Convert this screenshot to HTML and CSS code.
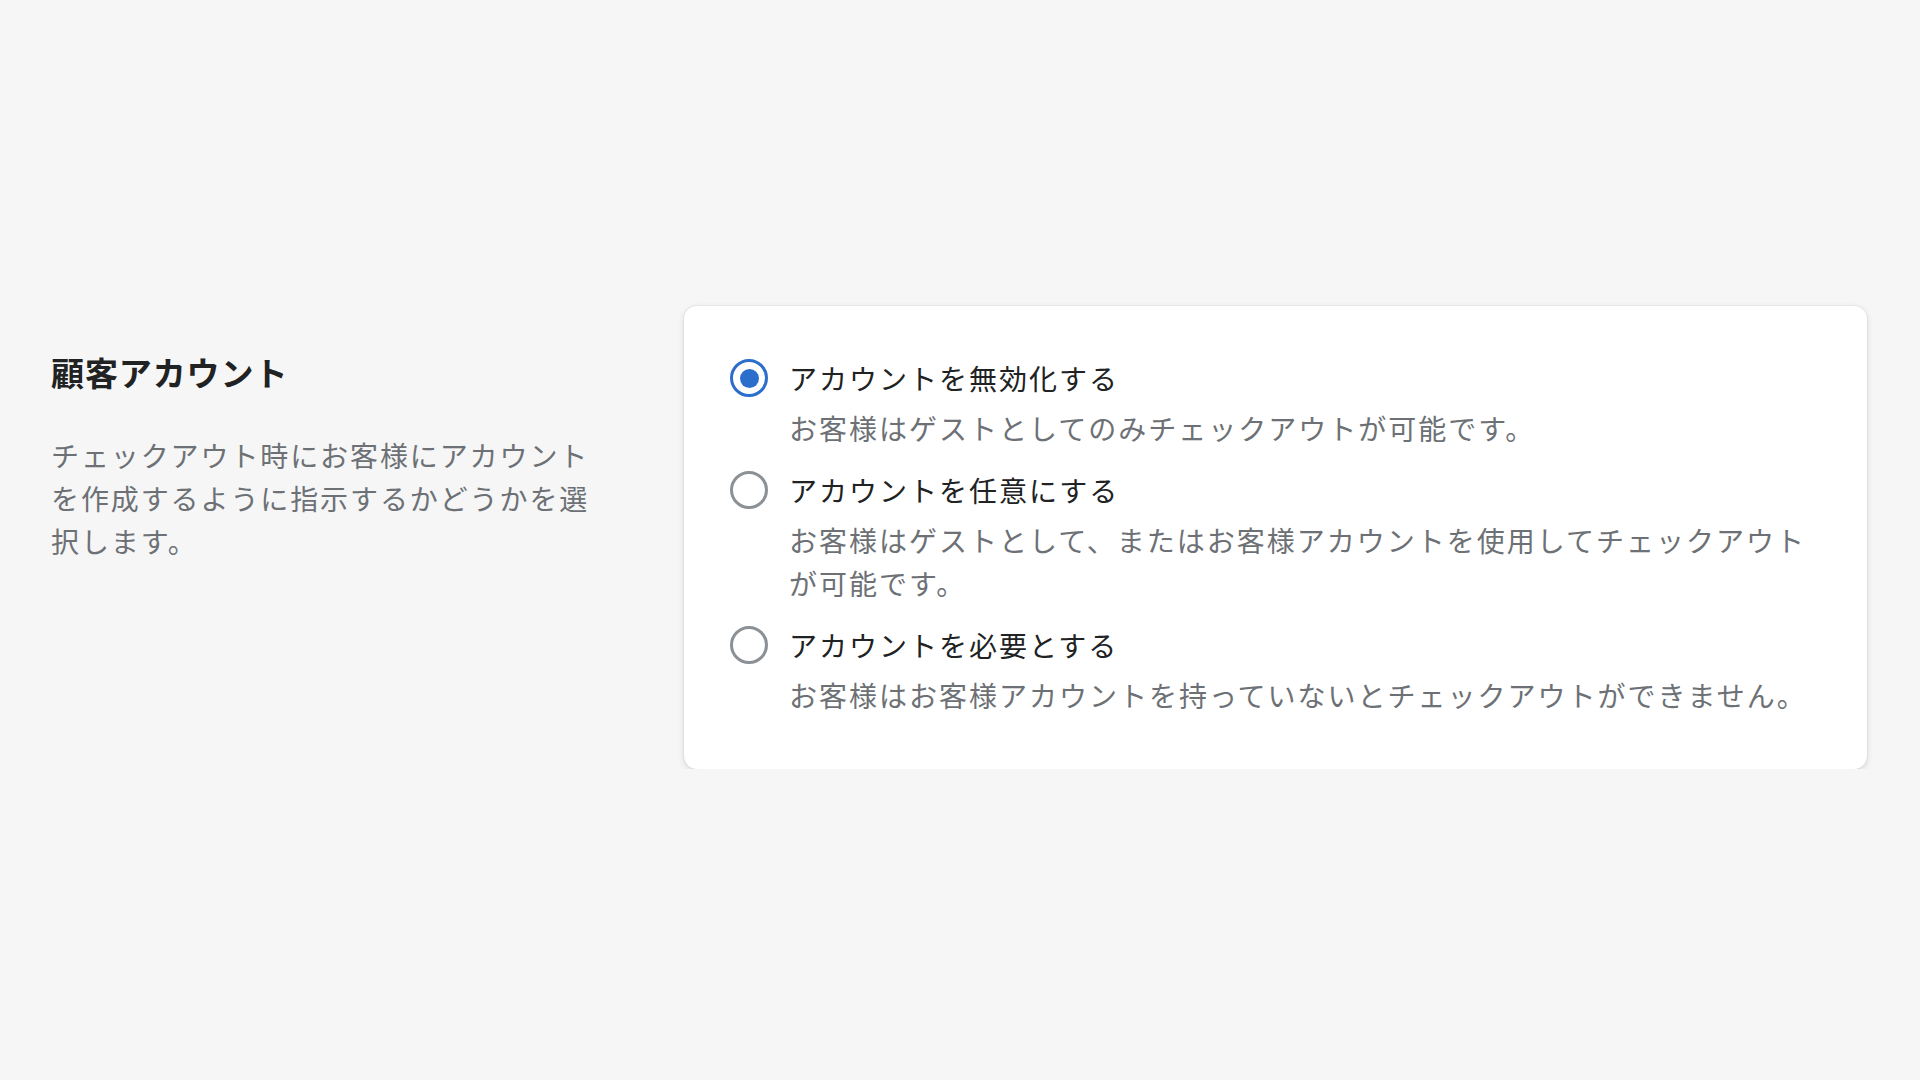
FILE: index.html
```html
<!DOCTYPE html>
<html lang="ja">
<head>
  <meta charset="utf-8">
  <title>顧客アカウント</title>
  <link rel="stylesheet" href="styles.css">
</head>
<body>
  <div class="page">
    <div class="annotation">
      <h2>顧客アカウント</h2>
      <p>チェックアウト時にお客様にアカウントを作成するように指示するかどうかを選択します。</p>
    </div>

    <div class="card">
      <div class="option">
        <input type="radio" name="accounts" id="accDisabled" checked>
        <label for="accDisabled">アカウントを無効化する</label>
        <p class="help">お客様はゲストとしてのみチェックアウトが可能です。</p>
      </div>
      <div class="option">
        <input type="radio" name="accounts" id="accOptional">
        <label for="accOptional">アカウントを任意にする</label>
        <p class="help">お客様はゲストとして、またはお客様アカウントを使用してチェックアウトが可能です。</p>
      </div>
      <div class="option">
        <input type="radio" name="accounts" id="accRequired">
        <label for="accRequired">アカウントを必要とする</label>
        <p class="help">お客様はお客様アカウントを持っていないとチェックアウトができません。</p>
      </div>
    </div>
  </div>
</body>
</html>
```

FILE: styles.css
```css
body {
  margin: 0;
  font-family: "Noto Sans CJK JP", "Noto Sans", sans-serif;
  background-color: #f6f6f7;
  color: #202223;
}

.page {
  display: grid;
  grid-template-columns: 550px 1fr;
  column-gap: 83px;
  align-items: start;
  padding: 306px 53px 0 51px;
}

.annotation {
  padding-top: 44px;
}

.annotation h2 {
  margin: 0;
  font-size: 33px;
  line-height: 44px;
  font-weight: 700;
  letter-spacing: 0.9px;
}

.annotation p {
  margin: 40px 0 0;
  font-size: 28px;
  line-height: 43px;
  letter-spacing: 1.9px;
  color: #6d7175;
}

.card {
  background-color: #fff;
  border-radius: 13px;
  padding: 51px 46px 52px 46px;
  box-shadow: 0 0 0 1px rgba(63, 63, 68, 0.05), 0 2px 6px 0 rgba(63, 63, 68, 0.15);
}

.option {
  display: grid;
  grid-template-columns: 38px 1fr;
  column-gap: 21px;
  font-size: 28px;
  line-height: 43px;
  letter-spacing: 2px;
}

.option + .option {
  margin-top: 19px;
}

.option input {
  appearance: none;
  -webkit-appearance: none;
  margin: 2px 0 0;
  width: 38px;
  height: 38px;
  border: 3px solid #8c9196;
  border-radius: 50%;
  box-sizing: border-box;
  background-color: #fff;
  position: relative;
}

.option input:checked {
  border-color: #2c6ecb;
}

.option input:checked::after {
  content: "";
  position: absolute;
  top: 6.5px;
  left: 6.5px;
  width: 19px;
  height: 19px;
  border-radius: 50%;
  background-color: #2c6ecb;
}

.option label {
  color: #202223;
}

.option .help {
  grid-column: 2;
  margin: 7px 0 0;
  color: #6d7175;
}
```
